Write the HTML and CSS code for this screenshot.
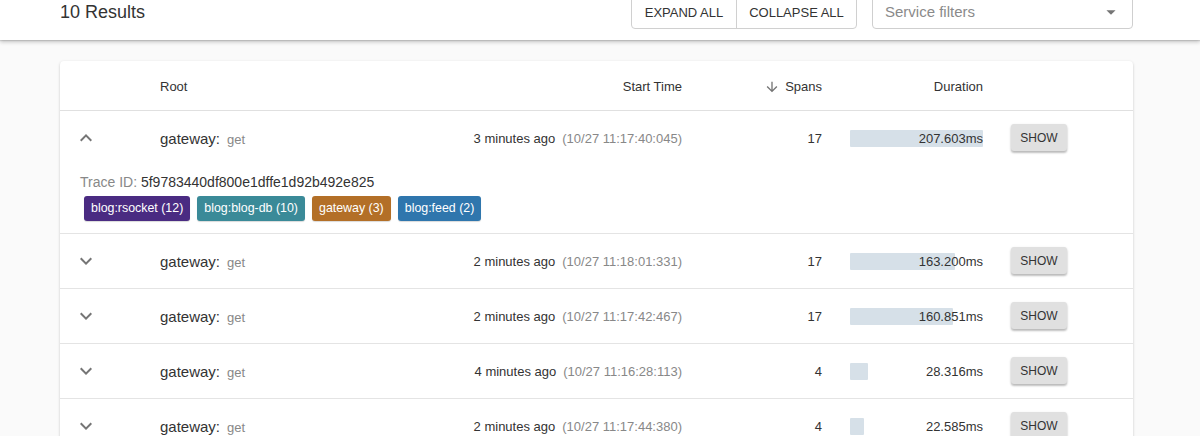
FILE: index.html
```html
<!DOCTYPE html>
<html>
<head>
<meta charset="utf-8">
<link rel="stylesheet" href="styles.css">
</head>
<body>
<header class="topbar">
  <div class="results">10 Results</div>
  <div class="actions">
    <div class="btn-group">
      <button class="gbtn gbtn-expand">EXPAND ALL</button>
      <button class="gbtn gbtn-collapse">COLLAPSE ALL</button>
    </div>
    <div class="select">
      <span class="select-ph">Service filters</span>
      <svg class="select-arrow" viewBox="0 0 24 24" width="22" height="22"><path d="M7 10l5 5 5-5z" fill="#757575"/></svg>
    </div>
  </div>
</header>
<main class="content">
  <section class="card">
    <div class="row head">
      <div class="c-toggle"></div>
      <div class="c-root">Root</div>
      <div class="c-start">Start Time</div>
      <div class="c-spans"><svg class="sort" viewBox="0 0 24 24" width="16" height="16"><path d="M20 12l-1.41-1.41L13 16.17V4h-2v12.17l-5.58-5.59L4 12l8 8 8-8z" fill="#757575"/></svg>Spans</div>
      <div class="c-dur head-dur">Duration</div>
      <div class="c-show"></div>
    </div>

    <div class="trace open">
      <div class="row">
        <div class="c-toggle"><svg viewBox="0 0 24 24" width="24" height="24"><path d="M12 8l-6 6 1.41 1.41L12 10.83l4.59 4.58L18 14z" fill="#757575"/></svg></div>
        <div class="c-root"><span class="svc">gateway:</span><span class="op">get</span></div>
        <div class="c-start"><span class="ago">3 minutes ago</span><span class="ts">(10/27 11:17:40:045)</span></div>
        <div class="c-spans">17</div>
        <div class="c-dur"><div class="bar" style="width:133px"></div><span class="dur-text">207.603ms</span></div>
        <div class="c-show"><button class="show">SHOW</button></div>
      </div>
      <div class="detail">
        <div class="trace-id"><span class="tid-label">Trace ID:</span> 5f9783440df800e1dffe1d92b492e825</div>
        <div class="tags">
          <span class="tag tag-rsocket">blog:rsocket (12)</span>
          <span class="tag tag-db">blog:blog-db (10)</span>
          <span class="tag tag-gw">gateway (3)</span>
          <span class="tag tag-feed">blog:feed (2)</span>
        </div>
      </div>
    </div>

    <div class="trace">
      <div class="row">
        <div class="c-toggle"><svg viewBox="0 0 24 24" width="24" height="24"><path d="M16.59 8.59L12 13.17 7.41 8.59 6 10l6 6 6-6z" fill="#757575"/></svg></div>
        <div class="c-root"><span class="svc">gateway:</span><span class="op">get</span></div>
        <div class="c-start"><span class="ago">2 minutes ago</span><span class="ts">(10/27 11:18:01:331)</span></div>
        <div class="c-spans">17</div>
        <div class="c-dur"><div class="bar" style="width:105px"></div><span class="dur-text">163.200ms</span></div>
        <div class="c-show"><button class="show">SHOW</button></div>
      </div>
    </div>

    <div class="trace">
      <div class="row">
        <div class="c-toggle"><svg viewBox="0 0 24 24" width="24" height="24"><path d="M16.59 8.59L12 13.17 7.41 8.59 6 10l6 6 6-6z" fill="#757575"/></svg></div>
        <div class="c-root"><span class="svc">gateway:</span><span class="op">get</span></div>
        <div class="c-start"><span class="ago">2 minutes ago</span><span class="ts">(10/27 11:17:42:467)</span></div>
        <div class="c-spans">17</div>
        <div class="c-dur"><div class="bar" style="width:103px"></div><span class="dur-text">160.851ms</span></div>
        <div class="c-show"><button class="show">SHOW</button></div>
      </div>
    </div>

    <div class="trace">
      <div class="row">
        <div class="c-toggle"><svg viewBox="0 0 24 24" width="24" height="24"><path d="M16.59 8.59L12 13.17 7.41 8.59 6 10l6 6 6-6z" fill="#757575"/></svg></div>
        <div class="c-root"><span class="svc">gateway:</span><span class="op">get</span></div>
        <div class="c-start"><span class="ago">4 minutes ago</span><span class="ts">(10/27 11:16:28:113)</span></div>
        <div class="c-spans">4</div>
        <div class="c-dur"><div class="bar" style="width:18px"></div><span class="dur-text">28.316ms</span></div>
        <div class="c-show"><button class="show">SHOW</button></div>
      </div>
    </div>

    <div class="trace">
      <div class="row">
        <div class="c-toggle"><svg viewBox="0 0 24 24" width="24" height="24"><path d="M16.59 8.59L12 13.17 7.41 8.59 6 10l6 6 6-6z" fill="#757575"/></svg></div>
        <div class="c-root"><span class="svc">gateway:</span><span class="op">get</span></div>
        <div class="c-start"><span class="ago">2 minutes ago</span><span class="ts">(10/27 11:17:44:380)</span></div>
        <div class="c-spans">4</div>
        <div class="c-dur"><div class="bar" style="width:14px"></div><span class="dur-text">22.585ms</span></div>
        <div class="c-show"><button class="show">SHOW</button></div>
      </div>
    </div>
  </section>
</main>
</body>
</html>
```

FILE: styles.css
```css
* { box-sizing: border-box; }
html, body { margin: 0; padding: 0; }
body {
  font-family: "Liberation Sans", Arial, sans-serif;
  color: #333;
  background: #fafafa;
  overflow: hidden;
  height: 436px;
}
.topbar {
  position: relative;
  z-index: 2;
  margin-top: -7px;
  height: 47px;
  background: #fff;
  box-shadow: 0 2px 4px rgba(0,0,0,0.22), 0 1px 1px rgba(0,0,0,0.1);
  display: flex;
  justify-content: space-between;
  align-items: flex-start;
  padding: 0 67px 0 60px;
}
.results {
  height: 36px;
  line-height: 38px;
  font-size: 18px;
  color: #333;
}
.actions {
  display: flex;
  align-items: flex-start;
  gap: 15px;
}
.btn-group {
  display: flex;
  height: 36px;
  border: 1px solid #d0d0d0;
  border-radius: 4px;
  background: #fff;
}
.gbtn {
  font-family: "Liberation Sans", Arial, sans-serif;
  font-size: 13px;
  color: #333;
  background: transparent;
  border: 0;
  padding: 2px 0 0 0;
  height: 34px;
  line-height: 34px;
  white-space: nowrap;
  text-align: center;
}
.gbtn + .gbtn { border-left: 1px solid #d0d0d0; }
.gbtn-expand { width: 104px; }
.gbtn-collapse { width: 120px; }
.select {
  width: 261px;
  height: 36px;
  border: 1px solid #cfcfcf;
  border-radius: 4px;
  display: flex;
  align-items: center;
  justify-content: space-between;
  padding: 1px 10px 0 12px;
}
.select-ph { font-size: 15px; color: #8a8a8a; }
.select-arrow { margin-top: 1px; }

.content { padding: 21px 67px 0 60px; }
.card {
  background: #fff;
  border-radius: 4px;
  box-shadow: 0 1px 3px rgba(0,0,0,0.18), 0 1px 1px rgba(0,0,0,0.08);
}
.row {
  display: flex;
  align-items: center;
  height: 55px;
  padding-right: 66px;
  font-size: 13px;
}
.row.head {
  height: 50px;
  border-bottom: 1px solid #e0e0e0;
  color: #333;
  padding-top: 2px;
}
.trace { border-bottom: 1px solid #e4e4e4; }
.trace .row { height: 54px; }
.c-toggle {
  width: 100px;
  padding-left: 14px;
  display: flex;
  align-items: center;
}
.c-root { flex: 1; }
.c-start { text-align: right; white-space: nowrap; }
.c-spans {
  width: 140px;
  text-align: right;
  display: flex;
  justify-content: flex-end;
  align-items: center;
}
.sort { margin-right: 5px; }
.c-dur {
  width: 133px;
  margin-left: 28px;
  position: relative;
  height: 17px;
  text-align: right;
}
.head-dur { height: auto; }
.c-show { width: 56px; margin-left: 28px; }
.svc { font-size: 15px; color: #333; }
.op { font-size: 13px; color: #888; margin-left: 7px; }
.ago { color: #333; }
.ts { color: #888; margin-left: 7px; }
.bar {
  position: absolute;
  left: 0; top: 0;
  height: 17px;
  background: #d6e0e8;
  border-radius: 1px;
}
.dur-text {
  position: relative;
  line-height: 17px;
  color: #333;
}
.show {
  width: 56px;
  height: 27px;
  border: 0;
  border-radius: 3px;
  background: #e0e0e0;
  box-shadow: 0 2px 2px rgba(0,0,0,0.2), 0 1px 3px rgba(0,0,0,0.12);
  font-family: "Liberation Sans", Arial, sans-serif;
  font-size: 12px;
  color: #333;
  padding: 0;
  margin-top: -1px;
}
.detail { padding: 8px 20px 12px 20px; }
.trace-id {
  font-size: 14px;
  line-height: 18px;
  color: #333;
}
.tid-label { color: #888; }
.tags {
  display: flex;
  gap: 7px;
  margin-top: 5px;
  padding-left: 4px;
}
.tag {
  height: 25px;
  line-height: 25px;
  padding: 0 7px;
  border-radius: 3px;
  color: #fff;
  font-size: 12.4px;
  box-shadow: 0 1px 1px rgba(0,0,0,0.15);
}
.tag-rsocket { background: #4a2b82; }
.tag-db { background: #3a8a98; }
.tag-gw { background: #b36f27; }
.tag-feed { background: #2f76ad; }
```
